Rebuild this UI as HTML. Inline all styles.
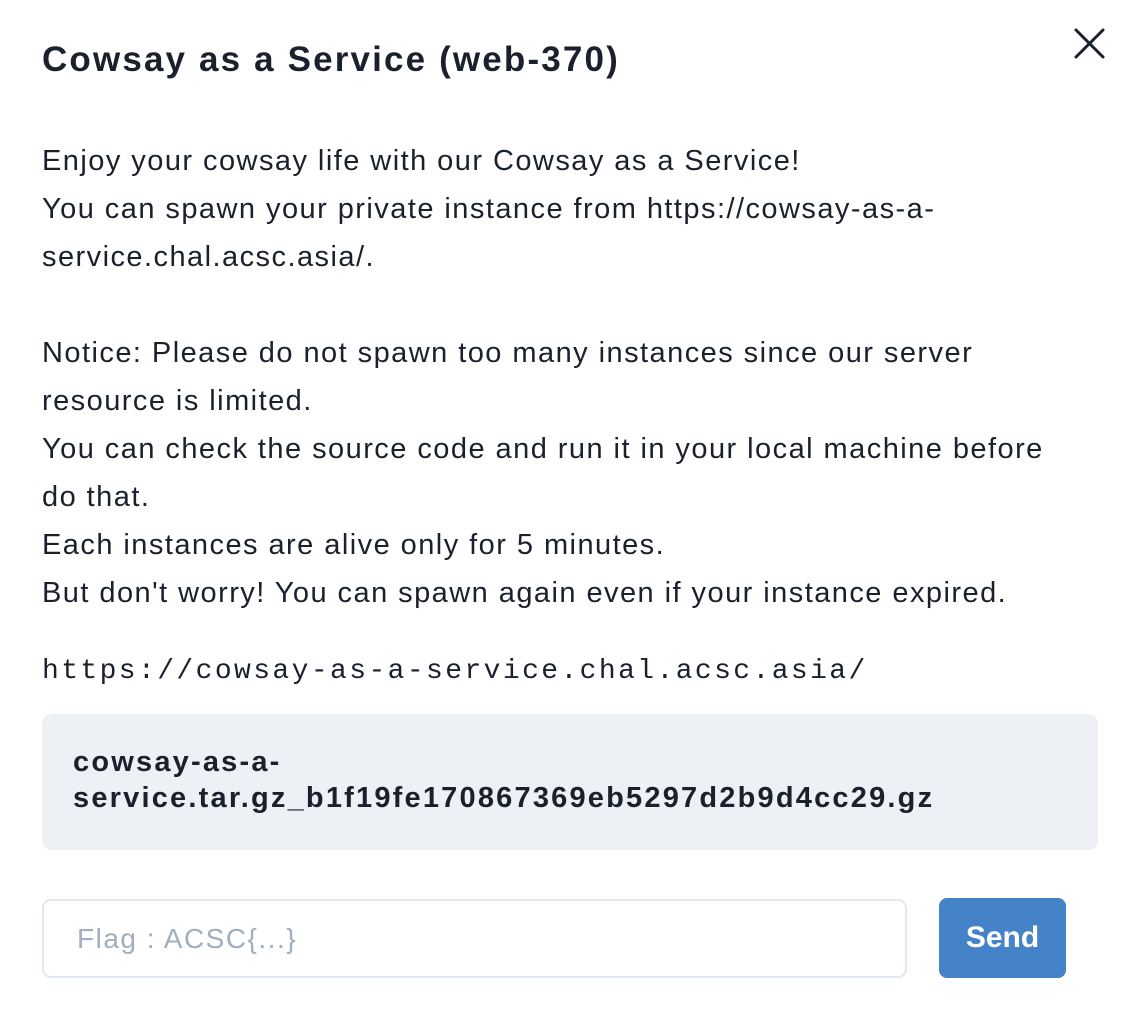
<!DOCTYPE html>
<html><head><style>
html,body{margin:0;padding:0;background:#fff;width:1136px;height:1024px;overflow:hidden;font-family:"Liberation Sans",sans-serif;color:#1a202c}
.abs{position:absolute;white-space:nowrap}
h1{position:absolute;left:42px;top:38px;margin:0;font-size:35px;line-height:44px;font-weight:bold;letter-spacing:2.15px;white-space:nowrap}
.body{position:absolute;left:42px;top:137px;font-size:29px;line-height:48px;white-space:pre;letter-spacing:1.45px}
.mono{position:absolute;left:42px;top:652px;font-family:"Liberation Mono",monospace;font-size:28px;line-height:40px;white-space:pre;letter-spacing:2.4px}
.box{position:absolute;left:42px;top:714px;width:1056px;height:136px;background:#edf1f6;border-radius:10px}
.box div{position:absolute;left:31px;top:30px;font-size:29px;line-height:36px;font-weight:bold;white-space:pre;letter-spacing:2.2px}
.inp{position:absolute;left:42px;top:899px;width:861px;height:75px;border:2px solid #e2e8f0;border-radius:9px}
.inp span{position:absolute;left:33px;top:18px;font-size:28px;line-height:40px;color:#a0aec0;letter-spacing:1.5px}
.btn{position:absolute;left:939px;top:898px;width:127px;height:80px;background:#4583c8;border-radius:8px;color:#fff;font-size:30px;font-weight:bold;text-align:center;line-height:80px}
</style></head><body>
<h1>Cowsay as a Service (web-370)</h1>
<svg class="abs" style="left:1072px;top:26px" width="36" height="36" viewBox="0 0 36 36"><path d="M4 4L31 31M31 4L4 31" stroke="#1a202c" stroke-width="3" stroke-linecap="round"/></svg>
<div class="body">Enjoy your cowsay life with our Cowsay as a Service!
You can spawn your private instance from https://cowsay-as-a-
service.chal.acsc.asia/.

Notice: Please do not spawn too many instances since our server
resource is limited.
You can check the source code and run it in your local machine before
do that.
Each instances are alive only for 5 minutes.
But don't worry! You can spawn again even if your instance expired.</div>
<div class="mono">https://cowsay-as-a-service.chal.acsc.asia/</div>
<div class="box"><div>cowsay-as-a-
service.tar.gz_b1f19fe170867369eb5297d2b9d4cc29.gz</div></div>
<div class="inp"><span>Flag : ACSC{...}</span></div>
<div class="btn">Send</div>
</body></html>
